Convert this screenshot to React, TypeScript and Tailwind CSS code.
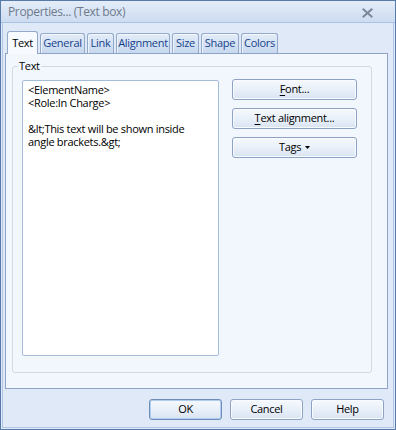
import React from "react";

const font = { fontFamily: '"Open Sans", "Noto Sans", sans-serif' };

function Btn({
  children,
  className = "",
  def = false,
}: {
  children: React.ReactNode;
  className?: string;
  def?: boolean;
}) {
  return (
    <div
      className={
        "flex items-center justify-center rounded-[3px] border text-[11px] tracking-[-0.3px] text-black bg-gradient-to-b from-[#f6f9fd] via-[#e9f0f9] to-[#d9e4f2] " +
        (def
          ? "border-[#6f8db8] shadow-[inset_0_0_0_1px_#afcdf0] "
          : "border-[#8ea3c3] shadow-[inset_0_0_0_1px_#f8fbff] ") +
        className
      }
    >
      {children}
    </div>
  );
}

const tabs = [
  { label: "General", w: "w-[45px]" },
  { label: "Link", w: "w-[27px]" },
  { label: "Alignment", w: "w-[54px]" },
  { label: "Size", w: "w-[27px]" },
  { label: "Shape", w: "w-[38px]" },
  { label: "Colors", w: "w-[37px]" },
];

export default function App() {
  return (
    <div
      className="w-[396px] h-[430px] border border-[#587aab] bg-[#dfe9f7] flex flex-col overflow-hidden select-none"
      style={font}
    >
      {/* Title bar */}
      <div className="h-[22px] shrink-0 flex items-center justify-between border-b border-[#a9c3e6] bg-gradient-to-b from-[#e4edf9] to-[#cddcf0] pl-[7px] pr-[22px]">
        <span className="text-[12px] tracking-[-0.35px] text-[#6e7a8b] leading-none">
          Properties... (Text box)
        </span>
        <svg width="11" height="10" viewBox="0 0 11 10" className="mt-[3px]">
          <path
            d="M1.5 1.5 L9.5 8.5 M9.5 1.5 L1.5 8.5"
            stroke="#7a8799"
            strokeWidth="2"
            strokeLinecap="square"
          />
        </svg>
      </div>

      {/* Body */}
      <div className="flex-1 mx-px mb-px border border-t-0 border-[#b3c7e4] flex flex-col">
        {/* Tabs */}
        <div className="flex items-end gap-[2px] pt-[8px] pl-[4px] relative z-10">
          <div className="w-[31px] h-[23px] -mb-px rounded-t-[3px] border border-b-0 border-[#93a9c9] bg-[#f7faff] flex items-start justify-center pt-[3px] text-[11px] tracking-[-0.3px] text-black">
            Text
          </div>
          {tabs.map((t) => (
            <div
              key={t.label}
              className={
                "h-[20px] rounded-t-[3px] border border-b-0 border-[#93a9c9] bg-gradient-to-b from-[#e3ecf8] to-[#c7d8ef] shadow-[inset_0_1px_0_#f4f8fd,inset_1px_0_0_#eef4fc] flex items-center justify-center text-[11px] tracking-[-0.3px] text-[#15428b] " +
                t.w
              }
            >
              {t.label}
            </div>
          ))}
        </div>

        {/* Tab panel */}
        <div className="ml-[2px] w-[383px] h-[336px] border border-[#8ea4c6] bg-[#f2f6fd] shrink-0">
          {/* Group box */}
          <div className="relative ml-[6px] mt-[12px] w-[360px] h-[307px] border border-[#d3d9e3] rounded-[3px] flex items-start">
            <span className="absolute left-[5px] -top-[9px] px-[1px] bg-[#f2f6fd] text-[11px] tracking-[-0.3px] text-black leading-[16px]">
              Text
            </span>
            <div className="ml-[9px] mt-[13px] w-[197px] h-[276px] border border-[#a5bcdb] rounded-[2px] bg-white pl-[5px] pt-[2px] text-[11px] leading-[13px] tracking-[-0.3px] text-black">
              <div>&lt;ElementName&gt;</div>
              <div>&lt;Role:In Charge&gt;</div>
              <div>&nbsp;</div>
              <div>&amp;lt;This text will be shown inside</div>
              <div>angle brackets.&amp;gt;</div>
            </div>
            <div className="ml-[13px] mt-[12px] flex flex-col gap-[8px]">
              <Btn className="w-[125px] h-[21px]">
                <span>
                  <span className="underline underline-offset-[2px]">F</span>ont...
                </span>
              </Btn>
              <Btn className="w-[125px] h-[21px]">
                <span>
                  <span className="underline underline-offset-[2px]">T</span>ext alignment...
                </span>
              </Btn>
              <Btn className="w-[125px] h-[21px]">
                <span className="flex items-center gap-[4px]">
                  Tags
                  <svg width="5" height="3" viewBox="0 0 5 3">
                    <path d="M0 0 H5 L2.5 3 Z" fill="#000" />
                  </svg>
                </span>
              </Btn>
            </div>
          </div>
        </div>

        {/* Bottom buttons */}
        <div className="mt-[10px] flex justify-end gap-[8px] pr-[9px]">
          <Btn def className="w-[73px] h-[21px]">
            OK
          </Btn>
          <Btn className="w-[73px] h-[21px]">Cancel</Btn>
          <Btn className="w-[73px] h-[21px]">Help</Btn>
        </div>
      </div>
    </div>
  );
}
